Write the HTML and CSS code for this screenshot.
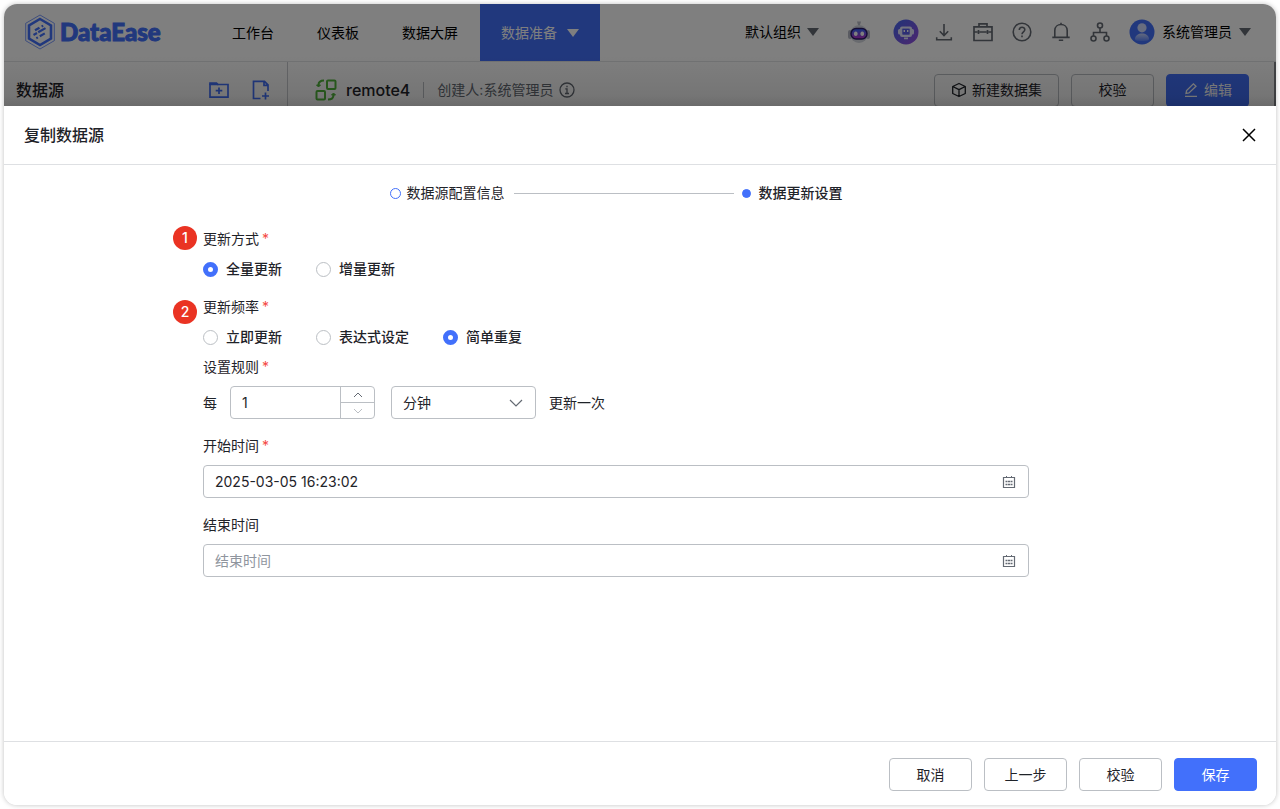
FILE: index.html
```html
<!DOCTYPE html>
<html lang="zh-CN">
<head>
<meta charset="utf-8">
<meta name="viewport" content="width=device-width, initial-scale=1">
<title>DataEase</title>
<link rel="stylesheet" href="styles.css">
</head>
<body>
<div class="window">
  <div class="backdrop">
    <header class="topbar">
      <a class="brand" href="#">
        <svg width="30" height="36" viewBox="0 0 30 36" fill="none" stroke="currentColor">
          <path d="M15 1 29.300 9.300v17.400L15 35 .7 26.700V9.300z" stroke-width=".7"/>
          <path d="M15 5 26 11.500v13L15 31 4 24.500v-13z" stroke-width="2.600"/>
          <path d="M10 16.300l4.500-2.600M16.600 12.500l1.600-.9M8.500 21l3.500-2M13.200 18.300l7.300-4.200M11.300 24.300l1.600-.9M14.800 22.300l5-2.900" stroke-width="2.200"/>
        </svg>
        <span>DataEase</span>
      </a>
      <nav class="nav">
        <a href="#">工作台</a>
        <a href="#">仪表板</a>
        <a href="#">数据大屏</a>
        <a href="#" class="active">数据准备
          <svg width="12" height="8" viewBox="0 0 12 8"><path d="M0 0h12L6 8z" fill="currentColor"/></svg>
        </a>
      </nav>
      <div class="tools">
        <button class="menu org">默认组织
          <svg width="12" height="8" viewBox="0 0 12 8"><path d="M0 0h12L6 8z" fill="#646a73"/></svg>
        </button>
        <button class="tool robot" aria-label="智能助手">
          <svg width="22" height="24" viewBox="0 0 22 24">
            <defs><linearGradient id="visor" x1="0" y1="0" x2="0" y2="1"><stop offset="0" stop-color="#2e6bff"/><stop offset="1" stop-color="#c02fc8"/></linearGradient></defs>
            <path d="M11 3v4" stroke="#c9ccd2" stroke-width="1.500"/><path d="M9 1.500h4L12 5h-2z" fill="#b9bcc6"/>
            <rect x="0" y="10" width="4" height="9" rx="2" fill="#b4b7c4"/><rect x="18" y="10" width="4" height="9" rx="2" fill="#b4b7c4"/>
            <rect x="2" y="5" width="18" height="18" rx="9" fill="#d3d6de"/>
            <rect x="3" y="8.500" width="16" height="10.500" rx="5" fill="url(#visor)" stroke="#2b1b6b" stroke-width="1.500"/>
            <rect x="6" y="11.500" width="3.500" height="4.500" rx="1.700" fill="#fff"/><rect x="12.500" y="11.500" width="3.500" height="4.500" rx="1.700" fill="#fff"/>
          </svg>
        </button>
        <button class="tool bot" aria-label="问答机器人">
          <svg width="26" height="26" viewBox="0 0 26 26">
            <defs><linearGradient id="disc" x1="0" y1="0" x2="1" y2="1"><stop offset="0" stop-color="#4268f0"/><stop offset="1" stop-color="#9a4ee0"/></linearGradient></defs>
            <circle cx="13" cy="13" r="12.500" fill="url(#disc)"/>
            <rect x="5" y="10" width="16" height="5.500" rx="1.500" fill="#e4e6ff"/>
            <rect x="7" y="7.500" width="12" height="10.500" rx="2" fill="#e4e6ff"/>
            <rect x="9" y="9.300" width="8" height="6.700" rx="1" fill="#5a5ee8" stroke="#e4e6ff" stroke-width=".6"/>
            <path d="M11.300 11v2M14.700 11v2" stroke="#fff" stroke-width="1.400"/>
            <path d="M11 19.300h4" stroke="#e4e6ff" stroke-width="1.800"/>
          </svg>
        </button>
        <button class="tool" aria-label="下载">
          <svg width="20" height="20" viewBox="0 0 20 20" fill="none" stroke="currentColor" stroke-width="1.600"><path d="M10 2v11.500M5.800 9.300 10 13.500l4.200-4.200M2.700 15.200v2.600h14.600v-2.600"/></svg>
        </button>
        <button class="tool" aria-label="工具箱">
          <svg width="20" height="20" viewBox="0 0 20 20" fill="none" stroke="currentColor" stroke-width="1.700"><path d="M1 4.800h18v13.700H1zM6 4.800V1.800h8v3M1 10h3.500M6.500 10h7M15.500 10H19M5.500 8v4M14.500 8v4"/></svg>
        </button>
        <button class="tool" aria-label="帮助">
          <svg width="20" height="20" viewBox="0 0 20 20" fill="none" stroke="currentColor" stroke-width="1.600"><circle cx="10" cy="10" r="8.800"/><path d="M7.300 8c0-3.800 5.500-3.600 5.500-.3 0 2-2.800 2.200-2.800 4.500M10 13.500v1.700"/></svg>
        </button>
        <button class="tool" aria-label="消息">
          <svg width="20" height="20" viewBox="0 0 20 20" fill="none" stroke="currentColor" stroke-width="1.600"><path d="M1.300 15.400h17.400M3.800 15.400V8.500c0-8 12.400-8 12.400 0v6.900M10 .8v2M7.800 18.300h4.400"/></svg>
        </button>
        <button class="tool" aria-label="组织管理">
          <svg width="20" height="20" viewBox="0 0 20 20" fill="none" stroke="currentColor" stroke-width="1.600"><circle cx="10" cy="3.500" r="2.500"/><circle cx="3.500" cy="16.500" r="2.500"/><circle cx="16.500" cy="16.500" r="2.500"/><path d="M10 6v4.500M3.500 14v-3.500h13V14"/></svg>
        </button>
        <button class="menu user">
          <svg width="26" height="26" viewBox="0 0 26 26">
            <defs><linearGradient id="torso" x1="0" y1="0" x2="0" y2="1"><stop offset="0" stop-color="#c7d5ff"/><stop offset="1" stop-color="#5c85ff"/></linearGradient></defs>
            <circle cx="13" cy="13" r="12.500" fill="#4270fb"/><circle cx="13" cy="8.800" r="4.600" fill="#cfdaff"/>
            <path d="M6 20c0-7.500 14-7.500 14 0 0 1.300-2 2-7 2s-7-.7-7-2z" fill="url(#torso)"/>
          </svg>
          <span>系统管理员</span>
          <svg width="12" height="8" viewBox="0 0 12 8"><path d="M0 0h12L6 8z" fill="#646a73"/></svg>
        </button>
      </div>
    </header>
    <div class="subbar">
      <aside class="side">
        <h2>数据源</h2>
        <button class="side-btn" aria-label="新建文件夹">
          <svg width="20" height="20" viewBox="0 0 20 20" fill="none" stroke="currentColor" stroke-width="1.700"><path d="M1 4.500h18v12.700H1z"/><path d="M1 5V3h6.500l2 2" fill="currentColor"/><path d="M10 7.500v6.500M6.700 10.700h6.600"/></svg>
        </button>
        <button class="side-btn" aria-label="新建数据源">
          <svg width="20" height="20" viewBox="0 0 20 20" fill="none" stroke="currentColor" stroke-width="1.700"><path d="M9.500 18.500H2.500V1.300h11l3.500 3.500V11M13 1.300v4h4M11 16h7M14.500 12.500v7"/></svg>
        </button>
      </aside>
      <div class="detail">
        <svg class="source" width="22" height="22" viewBox="0 0 22 22" fill="none" stroke="#52b83c" stroke-width="2"><rect x="12" y="1.500" width="8.500" height="8.500" rx="1"/><rect x="1.500" y="12" width="8.500" height="8.500" rx="1"/><path d="M9 1.500C5 1.500 3.500 3 3.500 6M13 20.500c4 0 5.500-1.500 5.500-4.500"/><path d="M1.500 6h4l-2 2zM16.500 16h4l-2-2z" fill="#52b83c" stroke-width="1"/></svg>
        <strong>remote4</strong>
        <span class="creator">创建人:系统管理员
          <svg width="16" height="16" viewBox="0 0 16 16" fill="none" stroke="currentColor" stroke-width="1.300"><circle cx="8" cy="8" r="7"/><path d="M6.300 6.800H8v4.700M6 11.500h4M8 3.800v1.500"/></svg>
        </span>
        <div class="actions">
          <button class="btn">
            <svg width="16" height="16" viewBox="0 0 16 16" fill="none" stroke="currentColor" stroke-width="1.300" stroke-linejoin="round"><path d="M8 1.500 14.300 4.500v7L8 14.500 1.700 11.500v-7zM1.700 4.500 8 7.700l6.300-3.200M8 7.700v6.800"/></svg>新建数据集
          </button>
          <button class="btn">校验</button>
          <button class="btn primary">
            <svg width="16" height="16" viewBox="0 0 16 16" fill="none" stroke="currentColor" stroke-width="1.300"><path d="M3 11.500l.6-3L10.400 1.800l2.600 2.500L6 11zM2 14.300h12"/></svg>编辑
          </button>
        </div>
      </div>
    </div>
  </div>

  <section class="dialog" role="dialog" aria-labelledby="dialog-title">
    <header class="dialog-head">
      <h1 id="dialog-title">复制数据源</h1>
      <button class="close" aria-label="关闭">
        <svg width="14" height="14" viewBox="0 0 14 14" fill="none" stroke="currentColor" stroke-width="1.500"><path d="M1 1l12 12M13 1 1 13"/></svg>
      </button>
    </header>
    <div class="dialog-body">
      <ol class="steps">
        <li>数据源配置信息</li>
        <li class="current">数据更新设置</li>
      </ol>
      <form class="form">
        <div class="field">
          <div class="label" id="mode">更新方式<i>*</i><b class="pin">1</b></div>
          <div class="radios" role="radiogroup" aria-labelledby="mode">
            <label><input type="radio" name="mode" checked>全量更新</label>
            <label><input type="radio" name="mode">增量更新</label>
          </div>
        </div>
        <div class="field tight">
          <div class="label" id="freq">更新频率<i>*</i><b class="pin low">2</b></div>
          <div class="radios" role="radiogroup" aria-labelledby="freq">
            <label><input type="radio" name="freq">立即更新</label>
            <label><input type="radio" name="freq">表达式设定</label>
            <label><input type="radio" name="freq" checked>简单重复</label>
          </div>
        </div>
        <div class="field">
          <label class="label" for="every">设置规则<i>*</i></label>
          <div class="rule">
            <span>每</span>
            <div class="number">
              <input id="every" type="number" value="1" min="1">
              <div class="spin">
                <button type="button" aria-label="增加"><svg width="10" height="6" viewBox="0 0 10 6" fill="none" stroke="currentColor"><path d="M1 5l4-4 4 4"/></svg></button>
                <button type="button" aria-label="减少" disabled><svg width="10" height="6" viewBox="0 0 10 6" fill="none" stroke="currentColor"><path d="M1 1l4 4 4-4"/></svg></button>
              </div>
            </div>
            <div class="select">
              <select aria-label="时间单位"><option>分钟</option></select>
              <svg width="14" height="8" viewBox="0 0 14 8" fill="none" stroke="currentColor" stroke-width="1.200"><path d="M1 1l6 6 6-6"/></svg>
            </div>
            <span>更新一次</span>
          </div>
        </div>
        <div class="field">
          <label class="label" for="start">开始时间<i>*</i></label>
          <div class="date">
            <input id="start" type="text" value="2025-03-05 16:23:02">
            <svg width="14" height="14" viewBox="0 0 14 14" fill="none" stroke="currentColor"><path d="M1.500 2.500h11v10h-11z" stroke-width="1.200"/><path d="M4.500 1v2M9.500 1v2"/><path d="M3.500 6.500h2M6 6.500h2M8.500 6.500h2M3.500 9.500h2M6 9.500h2M8.500 9.500h2" stroke-width="1.600"/></svg>
          </div>
        </div>
        <div class="field">
          <label class="label" for="end">结束时间</label>
          <div class="date">
            <input id="end" type="text" placeholder="结束时间">
            <svg width="14" height="14" viewBox="0 0 14 14" fill="none" stroke="currentColor"><path d="M1.500 2.500h11v10h-11z" stroke-width="1.200"/><path d="M4.500 1v2M9.500 1v2"/><path d="M3.500 6.500h2M6 6.500h2M8.500 6.500h2M3.500 9.500h2M6 9.500h2M8.500 9.500h2" stroke-width="1.600"/></svg>
          </div>
        </div>
      </form>
    </div>
    <footer class="dialog-foot">
      <button class="btn">取消</button>
      <button class="btn">上一步</button>
      <button class="btn">校验</button>
      <button class="btn primary">保存</button>
    </footer>
  </section>
</div>
</body>
</html>
```

FILE: styles.css
```css
* { box-sizing: border-box; }

body {
  margin: 0;
  padding: 4px;
  min-height: 100vh;
  display: flex;
  background: #fff;
  color: #1f2329;
  font: 14px/22px Inter, "Noto Sans CJK SC", sans-serif;
}

button, input, select { font: inherit; color: inherit; }
button { border: 0; padding: 0; background: none; cursor: pointer; }
a { color: inherit; text-decoration: none; }
h1, h2 { margin: 0; font-size: 16px; line-height: 24px; font-weight: 500; }
svg { display: block; flex: none; }

.window {
  flex: 1;
  min-width: 0;
  display: flex;
  flex-direction: column;
  border-radius: 13px;
  overflow: hidden;
  box-shadow: 0 0 5px rgba(0, 0, 0, .25);
}

/* Dimmed page behind the dialog */
.backdrop {
  position: relative;
  height: 102px;
  overflow: hidden;
  background: #fff;
}
.backdrop::after {
  content: "";
  position: absolute;
  inset: 0;
  background: linear-gradient(rgba(0, 0, 0, .5) 50%, rgba(0, 0, 0, .54) 90%, rgba(0, 0, 0, .58));
}

.topbar {
  height: 58px;
  display: flex;
  align-items: stretch;
  padding: 0 25px 0 21px;
  border-bottom: 1px solid #e3e5e8;
  color: #000;
}
.brand {
  width: 186px;
  display: flex;
  align-items: center;
  gap: 5px;
  padding-bottom: 2px;
  color: #4270fb;
  font: 900 24px/32px Lato, sans-serif;
  -webkit-text-stroke: 1px #4270fb;
}
.nav { display: flex; gap: 1px; }
.nav a { display: flex; align-items: center; gap: 10px; padding: 0 21px; }
.nav .active { background: #4270fb; color: #fff; }

.tools {
  margin-left: auto;
  padding-bottom: 2px;
  display: flex;
  align-items: center;
  gap: 19px;
  color: #646a73;
}
.tool svg { margin: auto; }
.menu { display: flex; align-items: center; gap: 6px; color: #000; }
.org { margin-right: 10px; }
.robot { margin-right: 4px; }
.bot { margin-right: -4px; }
.user { gap: 7px; }

.subbar { display: flex; height: 56px; }
.side {
  width: 284px;
  display: flex;
  align-items: center;
  gap: 22px;
  padding: 0 16px 0 12px;
  border-right: 1px solid #c9cbd0;
}
.side h2 { margin-right: auto; }
.side-btn { color: #4270fb; }
.detail { flex: 1; display: flex; align-items: center; padding: 0 25px 0 27px; border-right: 2px solid #85878c; }
.source { margin-right: 9px; }
.detail strong { font-size: 16px; font-weight: 500; }
.creator {
  display: flex;
  align-items: center;
  gap: 6px;
  margin-left: 13px;
  padding-left: 13px;
  color: #646a73;
  line-height: 16px;
  border-left: 1px solid #bbbfc4;
}
.actions { margin-left: auto; display: flex; gap: 12px; }

.btn {
  min-width: 83px;
  height: 33px;
  padding: 0 16px;
  display: flex;
  align-items: center;
  justify-content: center;
  gap: 5px;
  border: 1px solid #bbbfc4;
  border-radius: 4px;
  background: #fff;
}
.primary { background: #4270fb; border-color: #4270fb; color: #fff; }

/* Dialog */
.dialog { flex: 1; display: flex; flex-direction: column; background: #fff; }
.dialog-head {
  height: 59px;
  display: flex;
  align-items: center;
  justify-content: space-between;
  padding: 0 20px;
  border-bottom: 1px solid #dee0e3;
}
.close { color: #000; }
.dialog-body { flex: 1; padding: 17px 48px 16px 0; }

.steps {
  margin: 0 auto;
  padding: 0;
  width: 453px;
  display: flex;
  align-items: center;
  list-style: none;
}
.steps li { display: flex; align-items: center; gap: 8px; }
.steps li::before { content: ""; width: 11px; height: 11px; border: 1px solid #4270fb; border-radius: 50%; }
.steps li:first-child { flex: 1; gap: 6px; margin-right: 8px; }
.steps li:first-child::after { content: ""; flex: 1; height: 1px; margin-left: 3px; background: #bbbfc4; }
.steps .current { font-weight: 500; }
.steps .current::before { width: 9px; height: 9px; background: #4270fb; }
.steps li, .steps li::before { box-sizing: border-box; }

.form { max-width: 826px; margin: 24px auto 0; }
.field { margin-bottom: 16px; }
.tight { margin-bottom: 8px; }
.label { position: relative; display: block; margin-bottom: 8px; }
.label i { margin-left: 3px; font-style: normal; color: #f54a45; }
.pin {
  position: absolute;
  left: -30px;
  top: -2px;
  width: 24px;
  border-radius: 50%;
  background: #ea3323;
  color: #fff;
  font-weight: 500;
  line-height: 24px;
  text-align: center;
}
.low { top: 4px; }

.radios { display: flex; gap: 34px; font-weight: 500; }
.radios label { display: flex; align-items: center; gap: 8px; }
.radios input {
  appearance: none;
  width: 15px;
  height: 15px;
  margin: 0;
  border: 1px solid #bbbfc4;
  border-radius: 50%;
}
.radios input:checked { border: 5px solid #4270fb; }

.rule { display: flex; align-items: center; }
.number, .select, .date {
  height: 33px;
  display: flex;
  align-items: center;
  border: 1px solid #bbbfc4;
  border-radius: 4px;
}
.number input, .select select, .date input {
  flex: 1;
  min-width: 0;
  height: 100%;
  padding: 0 11px;
  border: 0;
  outline: 0;
  background: none;
  appearance: none;
}
.number { width: 145px; margin: 0 16px 0 13px; }
.number input { appearance: textfield; }
.number input::-webkit-inner-spin-button { appearance: none; }
.spin { width: 34px; height: 100%; display: grid; border-left: 1px solid #bbbfc4; color: #646a73; }
.spin button { display: grid; place-items: center; }
.spin button + button { border-top: 1px solid #bbbfc4; color: #bbbfc4; }
.select { position: relative; width: 145px; margin-right: 13px; }
.select svg { position: absolute; right: 12px; color: #646a73; pointer-events: none; }
.date { padding-right: 12px; }
.date svg { color: #646a73; }
.date input::placeholder { color: #8f959e; opacity: 1; }

.dialog-foot {
  display: flex;
  justify-content: flex-end;
  gap: 12px;
  padding: 16px 19px 14px;
  border-top: 1px solid #dee0e3;
}
```
